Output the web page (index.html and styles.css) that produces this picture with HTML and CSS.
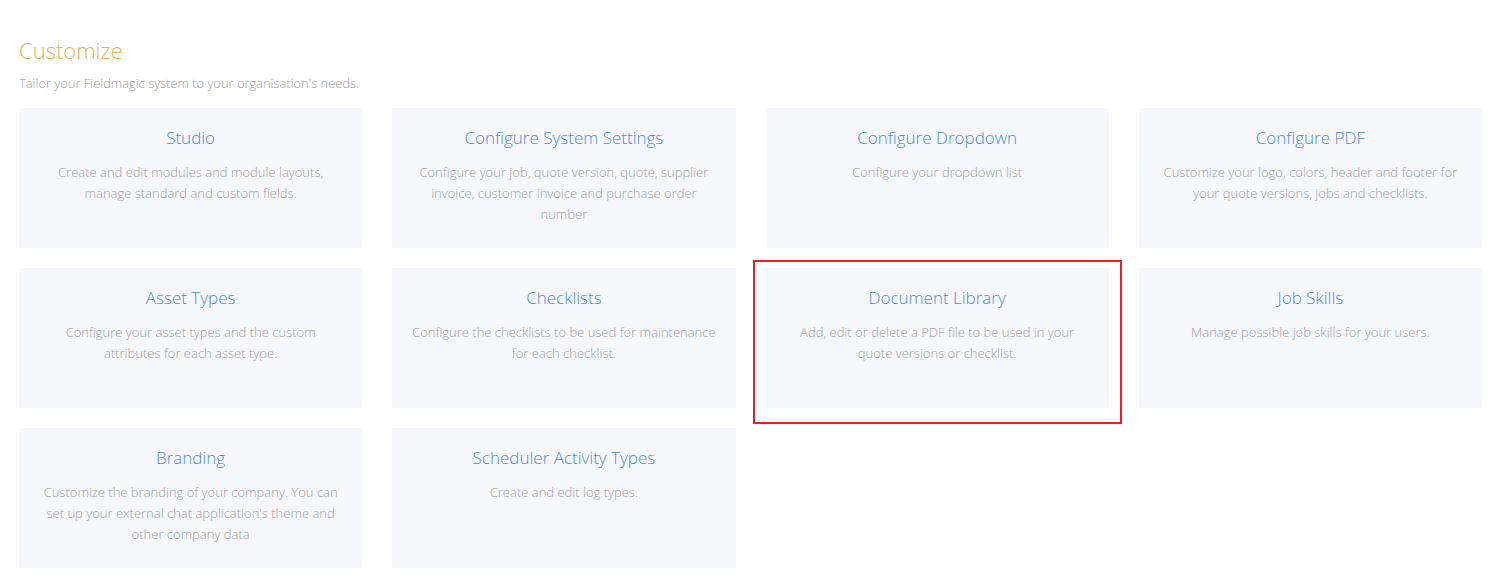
FILE: index.html
```html
<!DOCTYPE html>
<html>
<head>
<meta charset="utf-8">
<link rel="stylesheet" href="styles.css">
</head>
<body>
<div class="page">
  <h1 class="title">Customize</h1>
  <p class="subtitle">Tailor your Fieldmagic system to your organisation's needs.</p>
  <div class="grid">
    <div class="card">
      <div class="card-title">Studio</div>
      <div class="card-desc">Create and edit modules and module layouts, manage standard and custom fields.</div>
    </div>
    <div class="card">
      <div class="card-title">Configure System Settings</div>
      <div class="card-desc">Configure your job, quote version, quote, supplier invoice, customer invoice and purchase order number</div>
    </div>
    <div class="card">
      <div class="card-title">Configure Dropdown</div>
      <div class="card-desc">Configure your dropdown list</div>
    </div>
    <div class="card">
      <div class="card-title">Configure PDF</div>
      <div class="card-desc">Customize your logo, colors, header and footer for your quote versions, jobs and checklists.</div>
    </div>
    <div class="card">
      <div class="card-title">Asset Types</div>
      <div class="card-desc">Configure your asset types and the custom attributes for each asset type.</div>
    </div>
    <div class="card">
      <div class="card-title">Checklists</div>
      <div class="card-desc">Configure the checklists to be used for maintenance for each checklist.</div>
    </div>
    <div class="card card-highlight">
      <div class="card-title">Document Library</div>
      <div class="card-desc">Add, edit or delete a PDF file to be used in your quote versions or checklist.</div>
    </div>
    <div class="card">
      <div class="card-title">Job Skills</div>
      <div class="card-desc">Manage possible job skills for your users.</div>
    </div>
    <div class="card">
      <div class="card-title">Branding</div>
      <div class="card-desc">Customize the branding of your company. You can set up your external chat application's theme and other company data</div>
    </div>
    <div class="card">
      <div class="card-title">Scheduler Activity Types</div>
      <div class="card-desc">Create and edit log types.</div>
    </div>
  </div>
</div>
</body>
</html>
```
FILE: styles.css
```css
html, body {
  margin: 0;
  padding: 0;
  background: #ffffff;
}
body {
  font-family: "Open Sans", "Liberation Sans", sans-serif;
  font-weight: 300;
}
.page {
  padding: 36px 12px 0 19px;
}
.title {
  margin: 0;
  font-size: 22px;
  font-weight: 300;
  line-height: 28px;
  color: #f0ad4e;
}
.subtitle {
  margin: 10px 0 0 0;
  font-size: 12.9px;
  line-height: 18px;
  color: #9a9a9a;
}
.grid {
  margin-top: 16px;
  display: grid;
  grid-template-columns: repeat(4, 1fr);
  column-gap: 30px;
  row-gap: 20px;
}
.card {
  position: relative;
  background: #f6f7fb;
  height: 140px;
  box-sizing: border-box;
  padding: 18px 18px 0 18px;
  text-align: center;
}
.card-title {
  font-size: 17px;
  line-height: 24px;
  color: #4a8bd6;
}
.card-desc {
  margin-top: 12px;
  font-size: 13px;
  line-height: 21px;
  color: #9d9d9d;
}
.card-highlight::after {
  content: "";
  position: absolute;
  left: -13px;
  top: -8px;
  right: -13px;
  bottom: -16px;
  border: 2px solid #e5202a;
  pointer-events: none;
}
```
